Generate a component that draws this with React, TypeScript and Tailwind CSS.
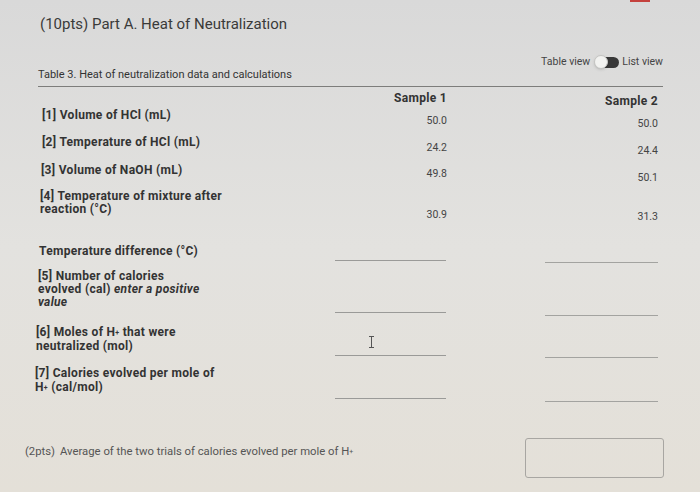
import { ReactNode } from 'react';

interface RowProps {
  label: ReactNode;
  v1?: string;
  v2?: string;
  height: string;
  labelPad: string;
  v1Top: string;
  v2Top: string;
  input?: boolean;
}

function Row({ label, v1, v2, height, labelPad, v1Top, v2Top, input }: RowProps) {
  return (
    <div className={`flex items-start ${height}`}>
      <div className={`w-[300px] text-[12px] tracking-[0.3px] font-bold text-[#333] ${labelPad}`}>{label}</div>
      {input ? (
        <>
          <div className={`w-[111px] border-b border-[#9a9a98] ${v1Top}`} />
          <div className="w-[99px]" />
          <div className={`w-[113px] border-b border-[#a3a3a0] ${v2Top}`} />
        </>
      ) : (
        <>
          <div className={`w-[112px] text-right text-[10.5px] leading-[14px] text-[#444] ${v1Top}`}>{v1}</div>
          <div className="w-[98px]" />
          <div className={`w-[113px] text-right text-[10.5px] leading-[14px] text-[#444] ${v2Top}`}>{v2}</div>
        </>
      )}
    </div>
  );
}

const Hplus = () => (
  <>
    H<sup className="text-[7px] relative -top-[1px]">+</sup>
  </>
);

export default function App() {
  return (
    <div className="w-[700px] h-[492px] overflow-hidden bg-gradient-to-b from-[#d9d9d9] via-[#e3e2df] to-[#e4e0d8] font-['Roboto','Liberation_Sans',sans-serif] text-[#333]">
      <div className="flex h-[2px] justify-end pr-[50px]">
        <div className="w-[20px] h-[2px] bg-[#c4413d]" />
      </div>
      <h1 className="pl-[40px] pt-[12px] text-[15px] leading-[20px] text-[#3a3a3a]">
        (10pts) Part A. Heat of Neutralization
      </h1>

      <div className="ml-[38px] mt-[21px] w-[625px] flex justify-between items-start border-b border-[#7d7d7b] pb-[4px]">
        <div className="mt-[13px] text-[11px] leading-[14px] text-[#333]">
          Table 3. Heat of neutralization data and calculations
        </div>
        <div className="flex items-center text-[10.5px] leading-[14px] text-[#444]">
          <span>Table view</span>
          <span className="ml-[4px] flex items-center">
            <span className="w-[14px] h-[14px] rounded-full bg-[#f2f2f0] border border-[#c4c4c2] shadow-sm z-10" />
            <span className="-ml-[7px] w-[18px] h-[11px] rounded-r-full bg-[#383838]" />
          </span>
          <span className="ml-[3px]">List view</span>
        </div>
      </div>

      <div className="flex pl-[40px] mt-[4px] h-[17px] text-[12px] tracking-[0.3px] font-bold leading-[14px] text-[#333]">
        <div className="w-[295px]" />
        <div className="w-[112px] text-right">Sample 1</div>
        <div className="w-[98px]" />
        <div className="w-[113px] text-right mt-[3px]">Sample 2</div>
      </div>

      <div className="pl-[35px]">
        <Row
          label={<span className="leading-[14px] block">[1] Volume of HCl (mL)</span>}
          v1="50.0" v2="50.0" height="h-[27px]" labelPad="pl-[7px]" v1Top="mt-[6px]" v2Top="mt-[9px]"
        />
        <Row
          label={<span className="leading-[14px] block">[2] Temperature of HCl (mL)</span>}
          v1="24.2" v2="24.4" height="h-[28px]" labelPad="pl-[7px]" v1Top="mt-[6px]" v2Top="mt-[9px]"
        />
        <Row
          label={<span className="leading-[14px] block">[3] Volume of NaOH (mL)</span>}
          v1="49.8" v2="50.1" height="h-[27px]" labelPad="pl-[6px]" v1Top="mt-[4px]" v2Top="mt-[8px]"
        />
        <Row
          label={<span className="leading-[13px] block">[4] Temperature of mixture after<br />reaction (°C)</span>}
          v1="30.9" v2="31.3" height="h-[54px]" labelPad="pl-[5px]" v1Top="mt-[18px]" v2Top="mt-[20px]"
        />
        <Row
          input
          label={<span className="leading-[14px] block">Temperature difference (°C)</span>}
          height="h-[26px]" labelPad="pl-[4px]" v1Top="h-[17px]" v2Top="h-[19px]"
        />
        <Row
          input
          label={
            <span className="leading-[13px] block">
              [5] Number of calories<br />
              evolved (cal) <i>enter a positive</i><br />
              <i>value</i>
            </span>
          }
          height="h-[55px]" labelPad="pl-[3px]" v1Top="h-[43px]" v2Top="h-[46px]"
        />
        <Row
          input
          label={
            <span className="leading-[14px] block">
              [6] Moles of <Hplus /> that were<br />
              neutralized (mol)
            </span>
          }
          height="h-[41px]" labelPad="pl-[1px]" v1Top="h-[31px]" v2Top="h-[33px]"
        />
        <Row
          input
          label={
            <span className="leading-[14px] block">
              [7] Calories evolved per mole of<br />
              <Hplus /> (cal/mol)
            </span>
          }
          height="h-[33px]" labelPad="pl-0" v1Top="h-[33px]" v2Top="h-[36px]"
        />
      </div>

      <div className="relative">
        <svg className="absolute left-[368px] -top-[63px]" width="7" height="12" viewBox="0 0 7 12">
          <path d="M1 0.5h5M3.5 0.5v11M1 11.5h5" stroke="#555" strokeWidth="1" fill="none" />
        </svg>
      </div>

      <div className="flex items-start pl-[25px] pr-[36px] mt-[39px]">
        <div className="mt-[7px] text-[11.3px] leading-[14px] text-[#555]">
          <span className="mr-[5px]">(2pts)</span>
          Average of the two trials of calories evolved per mole of <Hplus />
        </div>
        <div className="ml-auto w-[139px] h-[40px] rounded-[3px] border border-[#a8a6a2]" />
      </div>
    </div>
  );
}
